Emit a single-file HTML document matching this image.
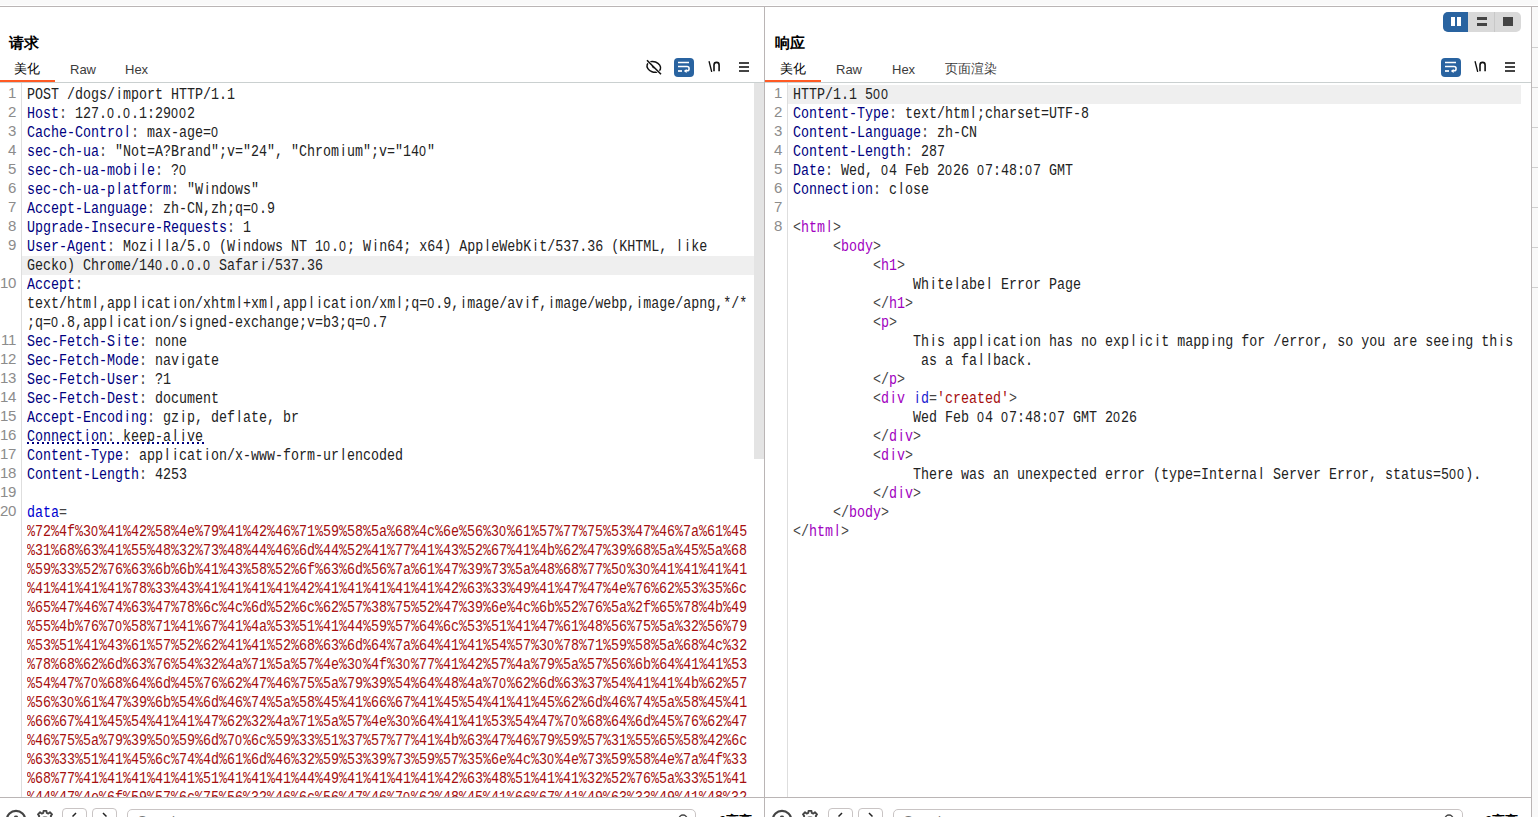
<!DOCTYPE html>
<html><head><meta charset="utf-8"><title>Repeater</title>
<style>
html,body{margin:0;padding:0}
body{width:1538px;height:817px;overflow:hidden;position:relative;background:#fff;font-family:"Liberation Sans",sans-serif;}
.abs{position:absolute}
#topband{position:absolute;left:0;top:0;width:1538px;height:5px;background:#f9f9f9}
#topline{position:absolute;left:0;top:6px;width:1538px;height:1px;background:#bab5b5}
#sidebar{position:absolute;left:1532px;top:7px;width:6px;height:810px;background:#f9f9f9}
.vline{position:absolute;top:7px;width:1px;height:810px;background:#bab5b5}
.pane{position:absolute;top:0;height:817px;overflow:hidden}
#req{left:0;width:764px}
#resp{left:765px;width:766px}
.title{position:absolute;top:33px;font-size:15px;font-weight:bold;color:#000;line-height:20px}
.tab{position:absolute;top:61px;font-size:13px;color:#3c3c3c;line-height:18px}
.tab.sel{color:#000}
.uline{position:absolute;top:80px;height:2px;background:#ff5a24}
.gline{position:absolute;top:82px;left:0;height:1px;background:#cad0d0}
.gutter{position:absolute;top:83px;width:1px;height:714px;background:#dedede}
.bline{position:absolute;top:797px;left:0;height:1px;background:#bab5b5}
.thumb{position:absolute;left:754px;top:83px;width:10px;height:376px;background:#e4e4e4}
.hl{position:absolute;height:19px;background:#efefef}
.ln,.row{position:absolute;height:19px;line-height:19px;margin-top:1px;font-family:"Liberation Mono",monospace;font-size:16px;white-space:pre;transform:scaleX(0.83333);transform-origin:0 0}
.ln{text-align:right;color:#8c8c8c;width:20px;transform:none;font-family:"Liberation Sans",sans-serif;font-size:15px;letter-spacing:-0.34px;margin-top:-2px}
#req .ln{left:-4px}
#resp .ln{left:-3px}
#req .row{left:27px}
#resp .row{left:28px}
.k{color:#000080}
.c{color:#444}
.v{color:#222}
.b{color:#0000d0}
.r{color:#a60e0e}
.t{color:#a100bf}
.a{color:#1a1ad0}
.u{}
.btn{position:absolute;border-radius:4px;background:#2963a0}
.iconbtn{position:absolute}
.nbtn{position:absolute;border:1px solid #c9c4c4;border-radius:4px;background:#fff}
.search{position:absolute;border:1px solid #c9c4c4;border-radius:5px;background:#fff}
.ed{position:absolute;left:0;top:0;width:100%;height:797px;overflow:hidden}
.dots{position:absolute;height:2px;background:repeating-linear-gradient(90deg,#000080 0 2px,transparent 2px 5px)}
.row i{font-style:normal;font-family:"Liberation Sans",sans-serif;font-size:15px;letter-spacing:1.26px;line-height:0}
.row b{font-weight:normal;font-family:"Liberation Sans",sans-serif;font-size:16px;line-height:0;padding-left:3.35px;letter-spacing:2.7px}

</style></head>
<body>
<div id="topband"></div>
<div id="topline"></div>
<div id="sidebar"></div>
<div class="abs" style="left:1532px;top:47px;width:6px;height:1px;background:#cfcfcf"></div><div class="abs" style="left:1532px;top:87px;width:6px;height:1px;background:#cfcfcf"></div><div class="abs" style="left:1532px;top:127px;width:6px;height:1px;background:#cfcfcf"></div><div class="abs" style="left:1532px;top:167px;width:6px;height:1px;background:#cfcfcf"></div><div class="abs" style="left:1532px;top:207px;width:6px;height:1px;background:#cfcfcf"></div><div class="abs" style="left:1532px;top:247px;width:6px;height:1px;background:#cfcfcf"></div><div class="abs" style="left:1532px;top:287px;width:6px;height:1px;background:#cfcfcf"></div>
<div class="vline" style="left:764px"></div>
<div class="vline" style="left:1531px"></div>

<div class="pane" id="req">
  <div class="title" style="left:9px">请求</div>
  <div class="tab sel" style="left:14px;top:60px">美化</div>
  <div class="tab" style="left:70px">Raw</div>
  <div class="tab" style="left:125px">Hex</div>
  <div class="uline" style="left:0;width:55px"></div>
  <div class="gline" style="width:764px"></div>
  <!-- toolbar -->
  <svg class="abs" style="left:642px;top:56px" width="24" height="24" viewBox="0 0 24 24">
    <ellipse cx="11.8" cy="10.9" rx="7" ry="5.2" transform="rotate(20 11.8 10.9)" fill="none" stroke="#111" stroke-width="1.5"/>
    <path d="M5 4.3 L19 18.3" stroke="#fff" stroke-width="3"/>
    <path d="M10 9.3 A2.2 2.2 0 0 0 12.6 12.3 Z" fill="#222"/>
    <path d="M5 4.3 L19 18.3" stroke="#111" stroke-width="1.6"/>
  </svg>
  <div class="btn" style="left:674px;top:58px;width:20px;height:19px"></div>
  <svg class="abs" style="left:674px;top:58px" width="20" height="19" viewBox="0 0 20 19">
    <path d="M4 4.5 H15" stroke="#fff" stroke-width="1.5"/>
    <path d="M4 8.6 H13 A2.1 2.1 0 0 1 13 12.8 H11.5" fill="none" stroke="#fff" stroke-width="1.5"/>
    <path d="M9.8 12.9 L12.6 10.9 V14.9 Z" fill="#fff"/>
    <path d="M4 13 H8" stroke="#fff" stroke-width="1.7"/>
  </svg>
  <svg class="abs" style="left:708px;top:58px" width="14" height="16" viewBox="0 0 14 16">
    <path d="M1.2 3.8 L3.6 13.3" stroke="#111" stroke-width="1.4" stroke-linecap="round"/>
    <path d="M6 13.2 V7 Q6 4.4 8.6 4.4 Q11.1 4.4 11.1 7 V13.2" fill="none" stroke="#111" stroke-width="1.6"/>
  </svg>
  <svg class="abs" style="left:739px;top:61px" width="11" height="12" viewBox="0 0 11 12">
    <rect x="0" y="1" width="10" height="2" fill="#444"/>
    <rect x="0" y="5" width="10" height="2" fill="#444"/>
    <rect x="0" y="9" width="10" height="2" fill="#444"/>
  </svg>
  <!-- editor -->
  <div class="gutter" style="left:21px"></div>
<div class="ed">
<div class="ln" style="top:85px">1</div>
<div class="row" style="top:85px"><span class="v">POST /dogs/<b>i</b>mport HTTP/1.1</span></div>
<div class="ln" style="top:104px">2</div>
<div class="row" style="top:104px"><span class="k">Host</span><span class="c">:</span><span class="v"> 127.<i>0</i>.<i>0</i>.1:29<i>0</i><i>0</i>2</span></div>
<div class="ln" style="top:123px">3</div>
<div class="row" style="top:123px"><span class="k">Cache-Contro<b>l</b></span><span class="c">:</span><span class="v"> max-age=<i>0</i></span></div>
<div class="ln" style="top:142px">4</div>
<div class="row" style="top:142px"><span class="k">sec-ch-ua</span><span class="c">:</span><span class="v"> &quot;Not=A?Brand&quot;;v=&quot;24&quot;, &quot;Chrom<b>i</b>um&quot;;v=&quot;14<i>0</i>&quot;</span></div>
<div class="ln" style="top:161px">5</div>
<div class="row" style="top:161px"><span class="k">sec-ch-ua-mob<b>i</b><b>l</b>e</span><span class="c">:</span><span class="v"> ?<i>0</i></span></div>
<div class="ln" style="top:180px">6</div>
<div class="row" style="top:180px"><span class="k">sec-ch-ua-p<b>l</b>atform</span><span class="c">:</span><span class="v"> &quot;W<b>i</b>ndows&quot;</span></div>
<div class="ln" style="top:199px">7</div>
<div class="row" style="top:199px"><span class="k">Accept-Language</span><span class="c">:</span><span class="v"> zh-CN,zh;q=<i>0</i>.9</span></div>
<div class="ln" style="top:218px">8</div>
<div class="row" style="top:218px"><span class="k">Upgrade-Insecure-Requests</span><span class="c">:</span><span class="v"> 1</span></div>
<div class="ln" style="top:237px">9</div>
<div class="row" style="top:237px"><span class="k">User-Agent</span><span class="c">:</span><span class="v"> Moz<b>i</b><b>l</b><b>l</b>a/5.<i>0</i> (W<b>i</b>ndows NT 1<i>0</i>.<i>0</i>; W<b>i</b>n64; x64) App<b>l</b>eWebK<b>i</b>t/537.36 (KHTML, <b>l</b><b>i</b>ke</span></div>
<div class="hl" style="top:256px;left:22px;width:732px"></div>
<div class="row" style="top:256px"><span class="v">Gecko) Chrome/14<i>0</i>.<i>0</i>.<i>0</i>.<i>0</i> Safar<b>i</b>/537.36</span></div>
<div class="ln" style="top:275px">10</div>
<div class="row" style="top:275px"><span class="k">Accept</span><span class="c">:</span></div>
<div class="row" style="top:294px"><span class="v">text/htm<b>l</b>,app<b>l</b><b>i</b>cat<b>i</b>on/xhtm<b>l</b>+xm<b>l</b>,app<b>l</b><b>i</b>cat<b>i</b>on/xm<b>l</b>;q=<i>0</i>.9,<b>i</b>mage/av<b>i</b>f,<b>i</b>mage/webp,<b>i</b>mage/apng,*/*</span></div>
<div class="row" style="top:313px"><span class="v">;q=<i>0</i>.8,app<b>l</b><b>i</b>cat<b>i</b>on/s<b>i</b>gned-exchange;v=b3;q=<i>0</i>.7</span></div>
<div class="ln" style="top:332px">11</div>
<div class="row" style="top:332px"><span class="k">Sec-Fetch-S<b>i</b>te</span><span class="c">:</span><span class="v"> none</span></div>
<div class="ln" style="top:351px">12</div>
<div class="row" style="top:351px"><span class="k">Sec-Fetch-Mode</span><span class="c">:</span><span class="v"> nav<b>i</b>gate</span></div>
<div class="ln" style="top:370px">13</div>
<div class="row" style="top:370px"><span class="k">Sec-Fetch-User</span><span class="c">:</span><span class="v"> ?1</span></div>
<div class="ln" style="top:389px">14</div>
<div class="row" style="top:389px"><span class="k">Sec-Fetch-Dest</span><span class="c">:</span><span class="v"> document</span></div>
<div class="ln" style="top:408px">15</div>
<div class="row" style="top:408px"><span class="k">Accept-Encod<b>i</b>ng</span><span class="c">:</span><span class="v"> gz<b>i</b>p, def<b>l</b>ate, br</span></div>
<div class="ln" style="top:427px">16</div>
<div class="row" style="top:427px"><span class="k u">Connect<b>i</b>on</span><span class="c u">:</span><span class="v u"> keep-a<b>l</b><b>i</b>ve</span></div>
<div class="ln" style="top:446px">17</div>
<div class="row" style="top:446px"><span class="k">Content-Type</span><span class="c">:</span><span class="v"> app<b>l</b><b>i</b>cat<b>i</b>on/x-www-form-ur<b>l</b>encoded</span></div>
<div class="ln" style="top:465px">18</div>
<div class="row" style="top:465px"><span class="k">Content-Length</span><span class="c">:</span><span class="v"> 4253</span></div>
<div class="ln" style="top:484px">19</div>
<div class="ln" style="top:503px">20</div>
<div class="row" style="top:503px"><span class="b">data</span><span class="c">=</span></div>
<div class="row" style="top:522px"><span class="r">%72%4f%3<i>0</i>%41%42%58%4e%79%41%42%46%71%59%58%5a%68%4c%6e%56%3<i>0</i>%61%57%77%75%53%47%46%7a%61%45</span></div>
<div class="row" style="top:541px"><span class="r">%31%68%63%41%55%48%32%73%48%44%46%6d%44%52%41%77%41%43%52%67%41%4b%62%47%39%68%5a%45%5a%68</span></div>
<div class="row" style="top:560px"><span class="r">%59%33%52%76%63%6b%6b%41%43%58%52%6f%63%6d%56%7a%61%47%39%73%5a%48%68%77%5<i>0</i>%3<i>0</i>%41%41%41%41</span></div>
<div class="row" style="top:579px"><span class="r">%41%41%41%41%78%33%43%41%41%41%41%42%41%41%41%41%41%42%63%33%49%41%47%47%4e%76%62%53%35%6c</span></div>
<div class="row" style="top:598px"><span class="r">%65%47%46%74%63%47%78%6c%4c%6d%52%6c%62%57%38%75%52%47%39%6e%4c%6b%52%76%5a%2f%65%78%4b%49</span></div>
<div class="row" style="top:617px"><span class="r">%55%4b%76%7<i>0</i>%58%71%41%67%41%4a%53%51%41%44%59%57%64%6c%53%51%41%47%61%48%56%75%5a%32%56%79</span></div>
<div class="row" style="top:636px"><span class="r">%53%51%41%43%61%57%52%62%41%41%52%68%63%6d%64%7a%64%41%41%54%57%3<i>0</i>%78%71%59%58%5a%68%4c%32</span></div>
<div class="row" style="top:655px"><span class="r">%78%68%62%6d%63%76%54%32%4a%71%5a%57%4e%3<i>0</i>%4f%3<i>0</i>%77%41%42%57%4a%79%5a%57%56%6b%64%41%41%53</span></div>
<div class="row" style="top:674px"><span class="r">%54%47%7<i>0</i>%68%64%6d%45%76%62%47%46%75%5a%79%39%54%64%48%4a%7<i>0</i>%62%6d%63%37%54%41%41%4b%62%57</span></div>
<div class="row" style="top:693px"><span class="r">%56%3<i>0</i>%61%47%39%6b%54%6d%46%74%5a%58%45%41%66%67%41%45%54%41%41%45%62%6d%46%74%5a%58%45%41</span></div>
<div class="row" style="top:712px"><span class="r">%66%67%41%45%54%41%41%47%62%32%4a%71%5a%57%4e%3<i>0</i>%64%41%41%53%54%47%7<i>0</i>%68%64%6d%45%76%62%47</span></div>
<div class="row" style="top:731px"><span class="r">%46%75%5a%79%39%5<i>0</i>%59%6d%7<i>0</i>%6c%59%33%51%37%57%77%41%4b%63%47%46%79%59%57%31%55%65%58%42%6c</span></div>
<div class="row" style="top:750px"><span class="r">%63%33%51%41%45%6c%74%4d%61%6d%46%32%59%53%39%73%59%57%35%6e%4c%3<i>0</i>%4e%73%59%58%4e%7a%4f%33</span></div>
<div class="row" style="top:769px"><span class="r">%68%77%41%41%41%41%41%51%41%41%41%44%49%41%41%41%41%42%63%48%51%41%41%32%52%76%5a%33%51%41</span></div>
<div class="row" style="top:788px"><span class="r">%44%47%4e%6f%59%57%6c%75%56%32%46%6c%56%47%46%7<i>0</i>%62%48%45%41%66%67%41%49%63%33%49%41%48%32</span></div>
</div>
  <div class="dots" style="left:27px;top:442px;width:177px"></div>
  <div class="thumb"></div>
  <div class="bline" style="width:764px"></div>
  <!-- bottom bar -->
  <svg class="abs" style="left:5px;top:809px" width="120" height="8" viewBox="0 0 120 8">
    <circle cx="11" cy="11" r="9.2" fill="none" stroke="#444" stroke-width="2.2"/>
    <circle cx="11" cy="8.8" r="2.2" fill="#444"/>
  </svg>
  <svg class="abs" style="left:35px;top:809px" width="20" height="8" viewBox="0 0 20 8"><g transform="translate(0,0.3)"><path d="M8.52 1.53 L11.48 1.53 L11.69 3.62 L13.31 4.29 L14.95 2.96 L17.04 5.05 L15.71 6.69 L16.38 8.31 L18.47 8.52 L18.47 11.48 L16.38 11.69 L15.71 13.31 L17.04 14.95 L14.95 17.04 L13.31 15.71 L11.69 16.38 L11.48 18.47 L8.52 18.47 L8.31 16.38 L6.69 15.71 L5.05 17.04 L2.96 14.95 L4.29 13.31 L3.62 11.69 L1.53 11.48 L1.53 8.52 L3.62 8.31 L4.29 6.69 L2.96 5.05 L5.05 2.96 L6.69 4.29 L8.31 3.62 Z" fill="none" stroke="#444" stroke-width="1.8" stroke-linejoin="round"/><circle cx="10" cy="10" r="2.6" fill="none" stroke="#999" stroke-width="1.5"/></g></svg>
  <div class="nbtn" style="left:62px;top:808px;width:23px;height:20px"></div>
  <div class="nbtn" style="left:92px;top:808px;width:23px;height:20px"></div>
  <svg class="abs" style="left:62px;top:808px" width="55" height="9" viewBox="0 0 55 9">
    <path d="M14 5 L10.5 8.5" stroke="#222" stroke-width="1.5"/>
    <path d="M41 5 L44.5 8.5" stroke="#222" stroke-width="1.5"/>
  </svg>
  <div class="search" style="left:127px;top:809px;width:567px;height:20px"></div>
  <div class="abs" style="left:138px;top:813px;font-size:13px;line-height:16px;color:#777">Search</div>
  <svg class="abs" style="left:676px;top:813px" width="14" height="6" viewBox="0 0 14 6">
    <circle cx="7" cy="6" r="4" fill="none" stroke="#444" stroke-width="1.5"/>
  </svg>
  <div class="abs" style="left:719px;top:813px;font-size:13px;font-weight:bold;line-height:16px;color:#000">0高亮</div>
</div>

<div class="pane" id="resp">
  <div class="title" style="left:10px">响应</div>
  <div class="tab sel" style="left:15px;top:60px">美化</div>
  <div class="tab" style="left:71px">Raw</div>
  <div class="tab" style="left:127px">Hex</div>
  <div class="tab" style="left:180px;top:60px">页面渲染</div>
  <div class="uline" style="left:0;width:56px"></div>
  <div class="gline" style="width:766px"></div>
  <!-- layout buttons -->
  <div class="abs" style="left:678px;top:12px;width:78px;height:20px;border-radius:5px;background:#d9d9d9;overflow:hidden">
    <div class="abs" style="left:0;top:0;width:25px;height:20px;background:#2963a0"></div>
    <div class="abs" style="left:8px;top:5px;width:4px;height:9px;background:#fff"></div>
    <div class="abs" style="left:14px;top:5px;width:4px;height:9px;background:#fff"></div>
    <div class="abs" style="left:34px;top:5px;width:10px;height:3px;background:#444"></div>
    <div class="abs" style="left:34px;top:11px;width:10px;height:3px;background:#444"></div>
    <div class="abs" style="left:51px;top:0;width:1px;height:20px;background:#c8c8c8"></div>
    <div class="abs" style="left:60px;top:5px;width:10px;height:9px;background:#444"></div>
  </div>
  <div class="btn" style="left:676px;top:58px;width:20px;height:19px"></div>
  <svg class="abs" style="left:676px;top:58px" width="20" height="19" viewBox="0 0 20 19">
    <path d="M4 4.5 H15" stroke="#fff" stroke-width="1.5"/>
    <path d="M4 8.6 H13 A2.1 2.1 0 0 1 13 12.8 H11.5" fill="none" stroke="#fff" stroke-width="1.5"/>
    <path d="M9.8 12.9 L12.6 10.9 V14.9 Z" fill="#fff"/>
    <path d="M4 13 H8" stroke="#fff" stroke-width="1.7"/>
  </svg>
  <svg class="abs" style="left:709px;top:58px" width="14" height="16" viewBox="0 0 14 16">
    <path d="M1.2 3.8 L3.6 13.3" stroke="#111" stroke-width="1.4" stroke-linecap="round"/>
    <path d="M6 13.2 V7 Q6 4.4 8.6 4.4 Q11.1 4.4 11.1 7 V13.2" fill="none" stroke="#111" stroke-width="1.6"/>
  </svg>
  <svg class="abs" style="left:740px;top:61px" width="11" height="12" viewBox="0 0 11 12">
    <rect x="0" y="1" width="10" height="2" fill="#444"/>
    <rect x="0" y="5" width="10" height="2" fill="#444"/>
    <rect x="0" y="9" width="10" height="2" fill="#444"/>
  </svg>
  <!-- editor -->
  <div class="gutter" style="left:22px"></div>
<div class="ed">
<div class="hl" style="top:85px;left:23px;width:733px"></div>
<div class="ln" style="top:85px">1</div>
<div class="row" style="top:85px"><span class="v">HTTP/1.1 5<i>0</i><i>0</i></span></div>
<div class="ln" style="top:104px">2</div>
<div class="row" style="top:104px"><span class="k">Content-Type</span><span class="c">:</span><span class="v"> text/htm<b>l</b>;charset=UTF-8</span></div>
<div class="ln" style="top:123px">3</div>
<div class="row" style="top:123px"><span class="k">Content-Language</span><span class="c">:</span><span class="v"> zh-CN</span></div>
<div class="ln" style="top:142px">4</div>
<div class="row" style="top:142px"><span class="k">Content-Length</span><span class="c">:</span><span class="v"> 287</span></div>
<div class="ln" style="top:161px">5</div>
<div class="row" style="top:161px"><span class="k">Date</span><span class="c">:</span><span class="v"> Wed, <i>0</i>4 Feb 2<i>0</i>26 <i>0</i>7:48:<i>0</i>7 GMT</span></div>
<div class="ln" style="top:180px">6</div>
<div class="row" style="top:180px"><span class="k">Connect<b>i</b>on</span><span class="c">:</span><span class="v"> c<b>l</b>ose</span></div>
<div class="ln" style="top:199px">7</div>
<div class="ln" style="top:218px">8</div>
<div class="row" style="top:218px"><span class="v"></span><span class="c">&lt;</span><span class="t">htm<b>l</b></span><span class="c">&gt;</span></div>
<div class="row" style="top:237px"><span class="v">     </span><span class="c">&lt;</span><span class="t">body</span><span class="c">&gt;</span></div>
<div class="row" style="top:256px"><span class="v">          </span><span class="c">&lt;</span><span class="t">h1</span><span class="c">&gt;</span></div>
<div class="row" style="top:275px"><span class="v">               Wh<b>i</b>te<b>l</b>abe<b>l</b> Error Page</span></div>
<div class="row" style="top:294px"><span class="v">          </span><span class="c">&lt;/</span><span class="t">h1</span><span class="c">&gt;</span></div>
<div class="row" style="top:313px"><span class="v">          </span><span class="c">&lt;</span><span class="t">p</span><span class="c">&gt;</span></div>
<div class="row" style="top:332px"><span class="v">               Th<b>i</b>s app<b>l</b><b>i</b>cat<b>i</b>on has no exp<b>l</b><b>i</b>c<b>i</b>t mapp<b>i</b>ng for /error, so you are see<b>i</b>ng th<b>i</b>s</span></div>
<div class="row" style="top:351px"><span class="v">                as a fa<b>l</b><b>l</b>back.</span></div>
<div class="row" style="top:370px"><span class="v">          </span><span class="c">&lt;/</span><span class="t">p</span><span class="c">&gt;</span></div>
<div class="row" style="top:389px"><span class="v">          </span><span class="c">&lt;</span><span class="t">d<b>i</b>v</span><span class="v"> </span><span class="a"><b>i</b>d</span><span class="c">=</span><span class="r">&#x27;created&#x27;</span><span class="c">&gt;</span></div>
<div class="row" style="top:408px"><span class="v">               Wed Feb <i>0</i>4 <i>0</i>7:48:<i>0</i>7 GMT 2<i>0</i>26</span></div>
<div class="row" style="top:427px"><span class="v">          </span><span class="c">&lt;/</span><span class="t">d<b>i</b>v</span><span class="c">&gt;</span></div>
<div class="row" style="top:446px"><span class="v">          </span><span class="c">&lt;</span><span class="t">d<b>i</b>v</span><span class="c">&gt;</span></div>
<div class="row" style="top:465px"><span class="v">               There was an unexpected error (type=Interna<b>l</b> Server Error, status=5<i>0</i><i>0</i>).</span></div>
<div class="row" style="top:484px"><span class="v">          </span><span class="c">&lt;/</span><span class="t">d<b>i</b>v</span><span class="c">&gt;</span></div>
<div class="row" style="top:503px"><span class="v">     </span><span class="c">&lt;/</span><span class="t">body</span><span class="c">&gt;</span></div>
<div class="row" style="top:522px"><span class="v"></span><span class="c">&lt;/</span><span class="t">htm<b>l</b></span><span class="c">&gt;</span></div>
</div>
  <div class="bline" style="width:766px"></div>
  <svg class="abs" style="left:6px;top:809px" width="22" height="8" viewBox="0 0 22 8">
    <circle cx="11" cy="11" r="9.2" fill="none" stroke="#444" stroke-width="2.2"/>
    <circle cx="11" cy="8.8" r="2.2" fill="#444"/>
  </svg>
  <svg class="abs" style="left:35px;top:809px" width="20" height="8" viewBox="0 0 20 8"><g transform="translate(0,0.3)"><path d="M8.52 1.53 L11.48 1.53 L11.69 3.62 L13.31 4.29 L14.95 2.96 L17.04 5.05 L15.71 6.69 L16.38 8.31 L18.47 8.52 L18.47 11.48 L16.38 11.69 L15.71 13.31 L17.04 14.95 L14.95 17.04 L13.31 15.71 L11.69 16.38 L11.48 18.47 L8.52 18.47 L8.31 16.38 L6.69 15.71 L5.05 17.04 L2.96 14.95 L4.29 13.31 L3.62 11.69 L1.53 11.48 L1.53 8.52 L3.62 8.31 L4.29 6.69 L2.96 5.05 L5.05 2.96 L6.69 4.29 L8.31 3.62 Z" fill="none" stroke="#444" stroke-width="1.8" stroke-linejoin="round"/><circle cx="10" cy="10" r="2.6" fill="none" stroke="#999" stroke-width="1.5"/></g></svg>
  <div class="nbtn" style="left:63px;top:808px;width:23px;height:20px"></div>
  <div class="nbtn" style="left:93px;top:808px;width:23px;height:20px"></div>
  <svg class="abs" style="left:63px;top:808px" width="55" height="9" viewBox="0 0 55 9">
    <path d="M14 5 L10.5 8.5" stroke="#222" stroke-width="1.5"/>
    <path d="M41 5 L44.5 8.5" stroke="#222" stroke-width="1.5"/>
  </svg>
  <div class="search" style="left:128px;top:809px;width:568px;height:20px"></div>
  <div class="abs" style="left:139px;top:813px;font-size:13px;line-height:16px;color:#777">Search</div>
  <svg class="abs" style="left:677px;top:813px" width="14" height="6" viewBox="0 0 14 6">
    <circle cx="7" cy="6" r="4" fill="none" stroke="#444" stroke-width="1.5"/>
  </svg>
  <div class="abs" style="left:720px;top:813px;font-size:13px;font-weight:bold;line-height:16px;color:#000">0高亮</div>
</div>

</body></html>
